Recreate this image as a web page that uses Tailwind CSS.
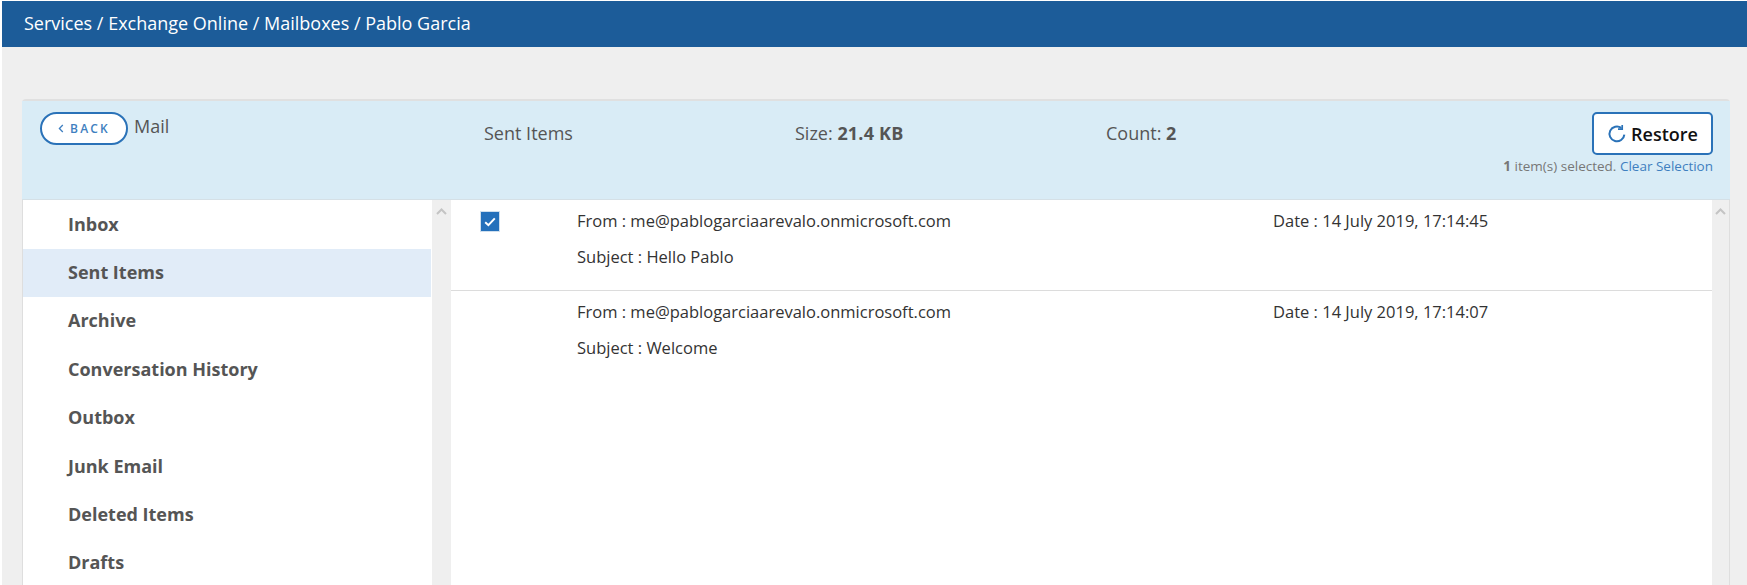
<!DOCTYPE html>
<html lang="en">
  <head>
    <meta charset="UTF-8" />
    <meta name="viewport" content="width=device-width, initial-scale=1.0" />
    <title>Pablo Garcia - Mail</title>
    <script src="https://cdn.jsdelivr.net/npm/@tailwindcss/browser@4"></script>
  </head>
  <body class="bg-white h-[585px] overflow-hidden pl-[2px] pt-px font-['Open_Sans',sans-serif]">
    <!-- Breadcrumb -->
    <header class="h-[46px] bg-[#1c5c99] pl-[22px] flex items-center pb-[3px] text-white text-lg">
      Services / Exchange Online / Mailboxes / Pablo Garcia
    </header>

    <main class="h-[538px] bg-[#efefef] pt-[52px] pl-[20px] pr-[17px] overflow-hidden">
      <div class="h-[600px] rounded-t-[4px] border-t-2 border-[#e0e0e0] bg-white flex flex-col">
        <!-- Toolbar -->
        <div class="h-[99px] shrink-0 bg-[#d9ecf6] border-b border-[#d5e0e6] flex pl-[18px] pr-[17px] text-[#555] text-lg">
          <div class="w-[444px] shrink-0 flex items-start gap-[6px] pt-[11px]">
            <button class="w-[88px] h-[33px] rounded-full border-2 border-[#2a72b8] bg-white flex items-center justify-center gap-[6px] text-[#3f7fc0] text-xs font-semibold tracking-[2.2px]">
              <svg width="6" height="9" viewBox="0 0 6 9" fill="none" stroke="#3f7fc0" stroke-width="1.3"><path d="M4.8 1 1.4 4.5l3.4 3.5" /></svg>
              BACK
            </button>
            <span class="leading-[24px] pt-[2px]">Mail</span>
          </div>
          <div class="w-[311px] shrink-0 pt-[20px] leading-[24px]">Sent Items</div>
          <div class="w-[311px] shrink-0 pt-[20px] leading-[24px]">Size: <b class="tracking-[0.2px]">21.4 KB</b></div>
          <div class="flex-1 pt-[20px] leading-[24px]">Count: <b>2</b></div>
          <div class="flex flex-col items-end pt-[11px]">
            <button class="w-[121px] h-[43px] rounded-[5px] border-2 border-[#2a72b8] bg-white flex items-center justify-center gap-[4px] text-[#111] font-semibold">
              <svg width="20" height="20" viewBox="0 0 18 18" fill="none" stroke="#2a72b8" stroke-width="1.8"><path d="M15.6 9.5A6.7 6.7 0 1 1 12.9 3.5" /><path d="M13.7 .8v3.8H9.9" stroke-width="1.5" /></svg>
              Restore
            </button>
            <p class="mt-[1px] text-[13.5px] leading-[20px] text-[#777] whitespace-nowrap"><b>1</b> item(s) selected. <a class="text-[#3f7fc0]">Clear Selection</a></p>
          </div>
        </div>

        <div class="flex flex-1 min-h-0">
          <!-- Folder list -->
          <nav class="w-[410px] shrink-0 border-l border-[#dedede] text-lg font-bold text-[#555]">
            <a class="h-[49px] flex items-center pl-[45px] pb-[2px]">Inbox</a>
            <a class="h-[48px] flex items-center pl-[45px] pb-[2px] bg-[#e1ecf8] mr-[1px]">Sent Items</a>
            <a class="h-[48px] flex items-center pl-[45px] pb-[2px]">Archive</a>
            <a class="h-[49px] flex items-center pl-[45px] pb-[2px]">Conversation History</a>
            <a class="h-[48px] flex items-center pl-[45px] pb-[2px]">Outbox</a>
            <a class="h-[49px] flex items-center pl-[45px] pb-[2px]">Junk Email</a>
            <a class="h-[48px] flex items-center pl-[45px] pb-[2px]">Deleted Items</a>
            <a class="h-[48px] flex items-center pl-[45px] pb-[2px]">Drafts</a>
          </nav>
          <div class="w-[19px] shrink-0 bg-[#efefef] flex justify-center pt-[8px]">
            <svg width="11" height="7" viewBox="0 0 11 7" fill="none" stroke="#c4c4c4" stroke-width="2"><path d="M1 6l4.5-4.5L10 6" /></svg>
          </div>

          <!-- Messages -->
          <section class="flex-1 text-[16.5px] text-[#333]">
            <div class="h-[91px] border-b border-[#dcdcdc] flex pt-[10px]">
              <div class="w-[126px] pl-[29px] pt-px shrink-0">
                <span class="w-[20px] h-[21px] bg-[#2470bb] border border-[#cfdfee] flex items-center justify-center">
                  <svg width="12" height="10" viewBox="0 0 12 10" fill="none" stroke="#fff" stroke-width="2"><path d="M1.2 5.2 4.4 8.2 10.8 1.4" /></svg>
                </span>
              </div>
              <div class="w-[696px] shrink-0">
                <p class="leading-[22px]">From : me@pablogarciaarevalo.onmicrosoft.com</p>
                <p class="mt-[14px] leading-[22px]">Subject : Hello Pablo</p>
              </div>
              <p class="leading-[22px]">Date : 14 July 2019, 17:14:45</p>
            </div>
            <div class="h-[90px] flex pt-[10px]">
              <div class="w-[126px] shrink-0"></div>
              <div class="w-[696px] shrink-0">
                <p class="leading-[22px]">From : me@pablogarciaarevalo.onmicrosoft.com</p>
                <p class="mt-[14px] leading-[22px]">Subject : Welcome</p>
              </div>
              <p class="leading-[22px]">Date : 14 July 2019, 17:14:07</p>
            </div>
          </section>
          <div class="w-[18px] shrink-0 bg-[#efefef] border-r border-[#dedede] flex justify-center pt-[8px]">
            <svg width="11" height="7" viewBox="0 0 11 7" fill="none" stroke="#c4c4c4" stroke-width="2"><path d="M1 6l4.5-4.5L10 6" /></svg>
          </div>
        </div>
      </div>
    </main>
  </body>
</html>
